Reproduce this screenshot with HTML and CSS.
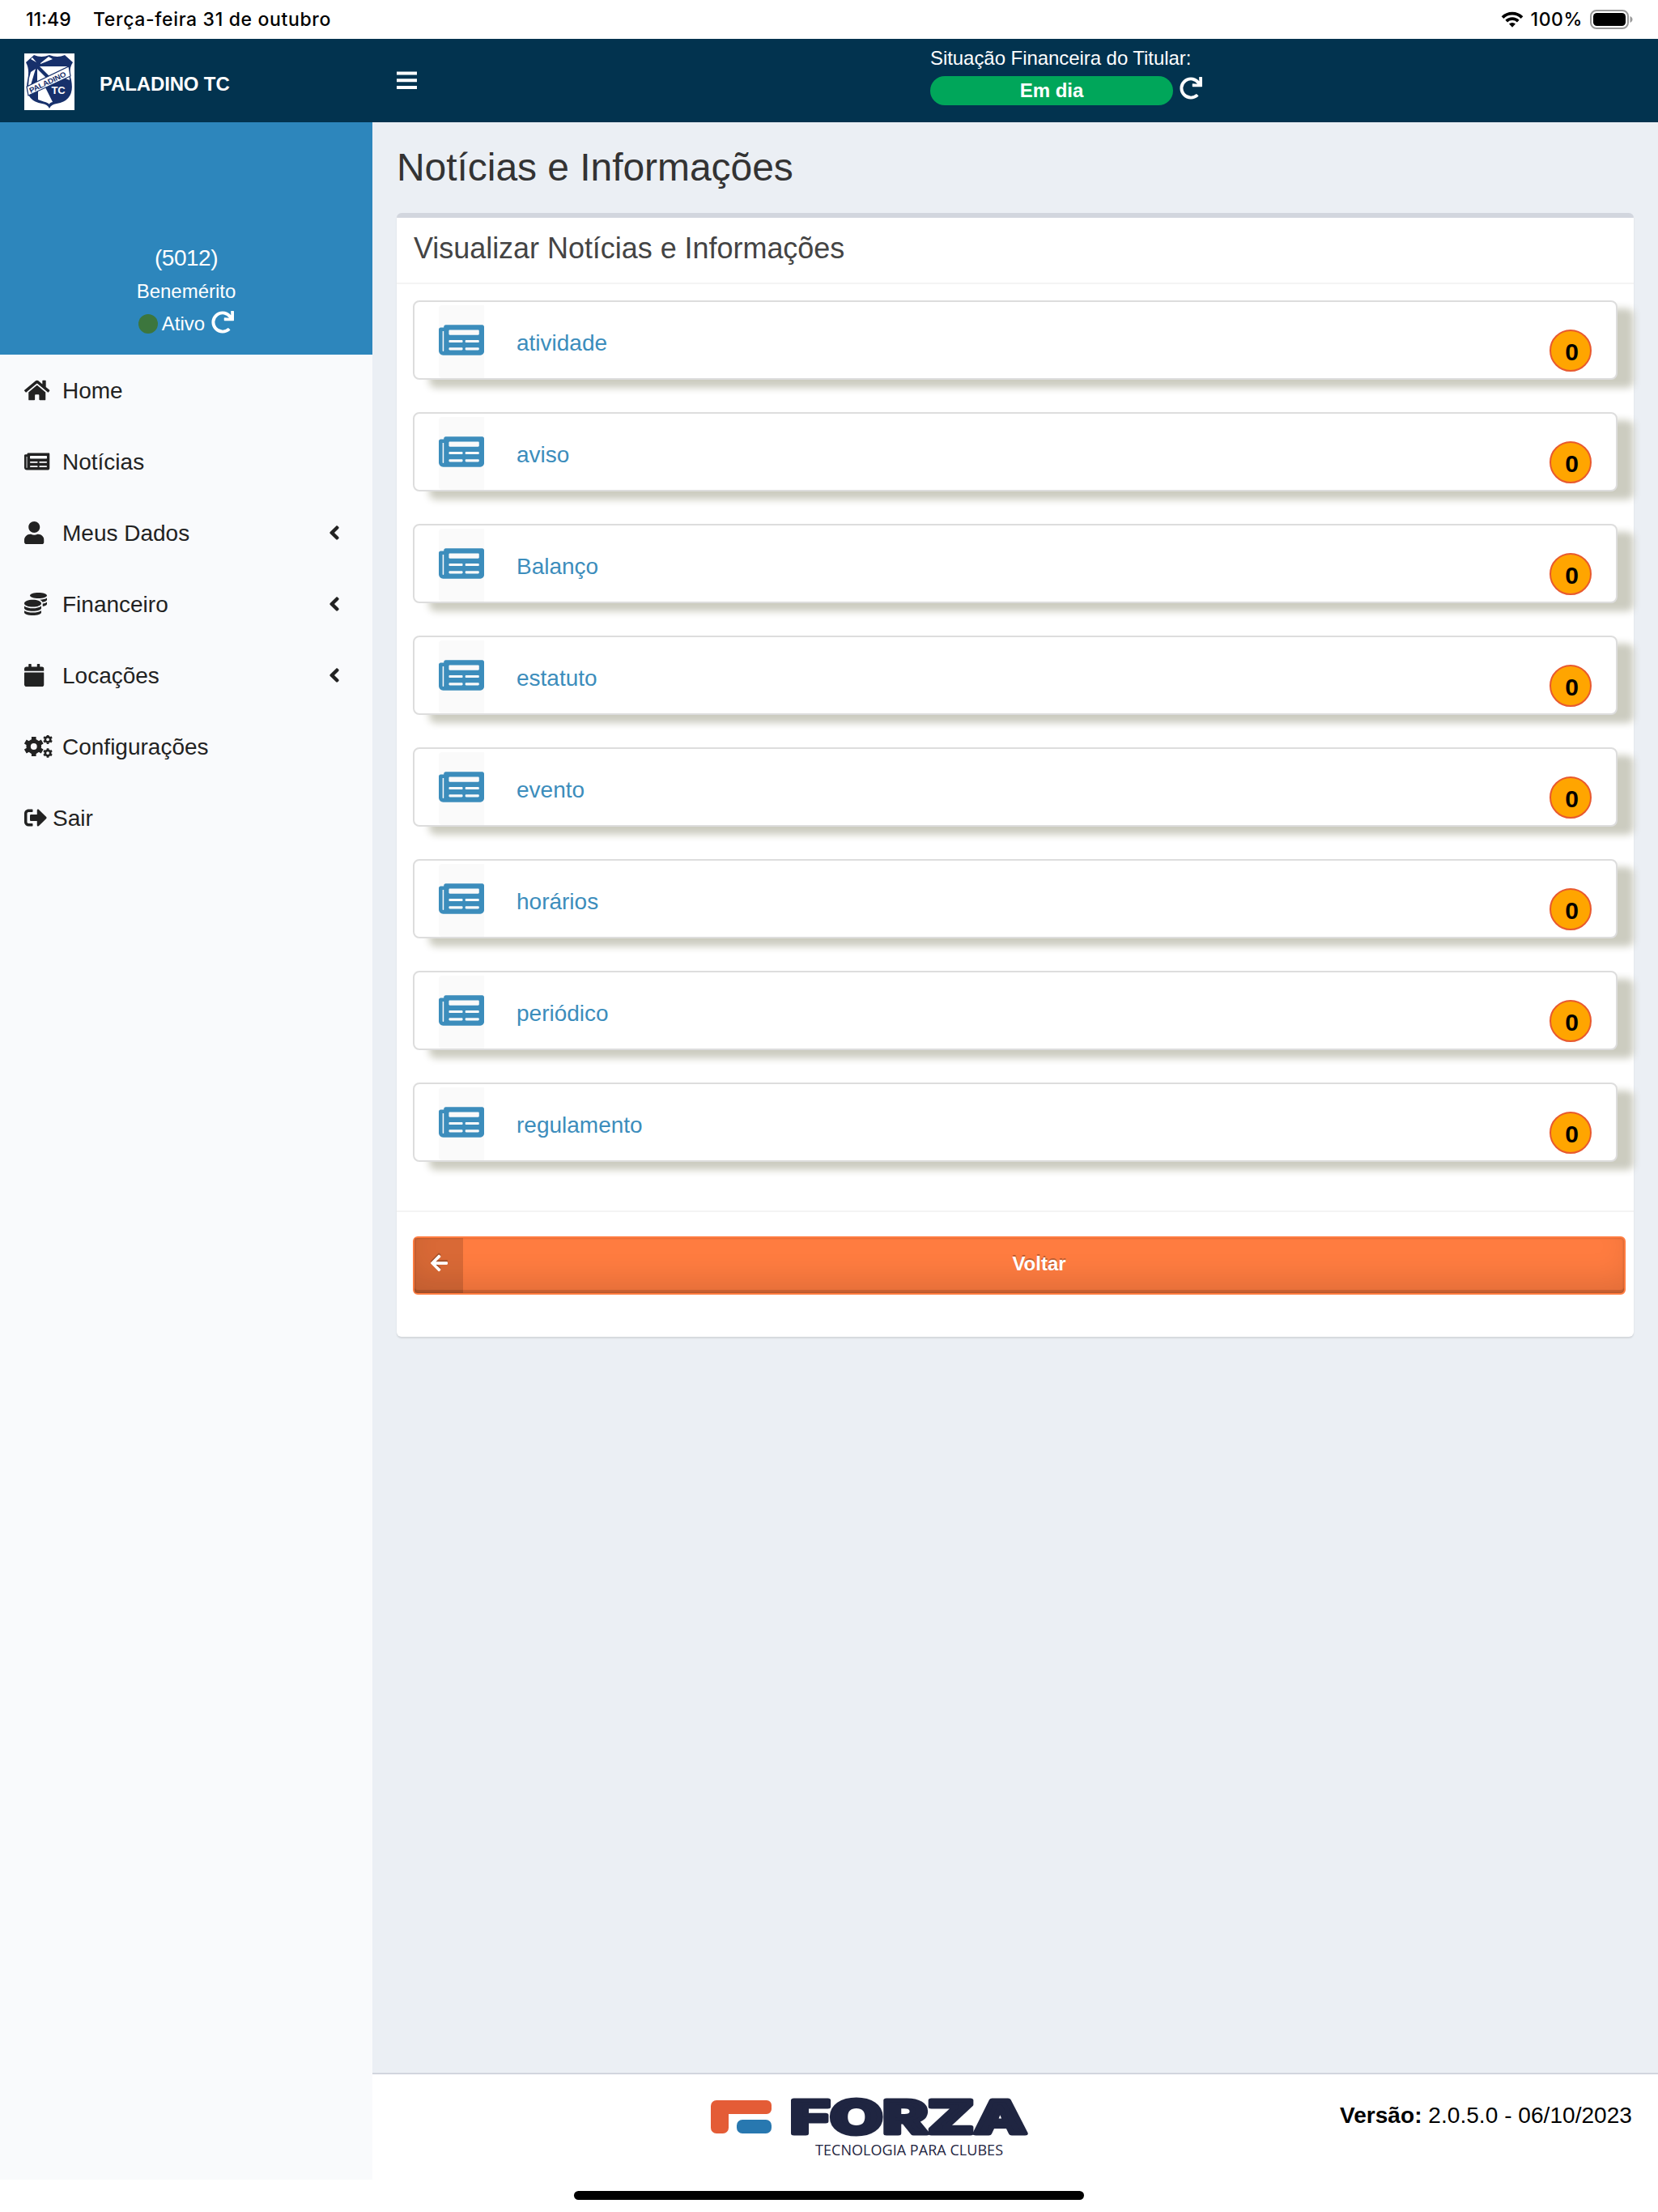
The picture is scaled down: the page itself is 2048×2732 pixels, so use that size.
FILE: index.html
```
<!DOCTYPE html>
<html lang="pt-BR">
<head>
    <meta charset="UTF-8">
    <meta name="viewport" content="width=device-width, initial-scale=1.0">
    <title>Paladino TC - Notícias e Informações</title>
    <link rel="stylesheet" href="styles.css">
</head>
<body>
    <!-- ícones -->
    <svg class="sprite" width="0" height="0">
        <symbol id="news" viewBox="0 0 576 512"><path d="M552 64H88c-13.255 0-24 10.745-24 24v8H24c-13.255 0-24 10.745-24 24v272c0 30.928 25.072 56 56 56h472c26.51 0 48-21.49 48-48V88c0-13.255-10.745-24-24-24zM56 400a8 8 0 0 1-8-8V144h16v248a8 8 0 0 1-8 8zm236-16H140c-6.627 0-12-5.373-12-12v-8c0-6.627 5.373-12 12-12h152c6.627 0 12 5.373 12 12v8c0 6.627-5.373 12-12 12zm208 0H348c-6.627 0-12-5.373-12-12v-8c0-6.627 5.373-12 12-12h152c6.627 0 12 5.373 12 12v8c0 6.627-5.373 12-12 12zm-208-96H140c-6.627 0-12-5.373-12-12v-8c0-6.627 5.373-12 12-12h152c6.627 0 12 5.373 12 12v8c0 6.627-5.373 12-12 12zm208 0H348c-6.627 0-12-5.373-12-12v-8c0-6.627 5.373-12 12-12h152c6.627 0 12 5.373 12 12v8c0 6.627-5.373 12-12 12zm0-96H140c-6.627 0-12-5.373-12-12v-40c0-6.627 5.373-12 12-12h360c6.627 0 12 5.373 12 12v40c0 6.627-5.373 12-12 12z"/></symbol>
        <symbol id="home" viewBox="0 0 576 512"><path d="M280.37 148.26L96 300.11V464a16 16 0 0 0 16 16l112.06-.29a16 16 0 0 0 15.92-16V368a16 16 0 0 1 16-16h64a16 16 0 0 1 16 16v95.64a16 16 0 0 0 16 16.05L464 480a16 16 0 0 0 16-16V300L295.67 148.26a12.19 12.19 0 0 0-15.3 0zM571.6 251.47L488 182.56V44.05a12 12 0 0 0-12-12h-56a12 12 0 0 0-12 12v72.61L318.47 43a48 48 0 0 0-61 0L4.34 251.47a12 12 0 0 0-1.6 16.9l25.5 31A12 12 0 0 0 45.15 301l235.22-193.74a12.19 12.19 0 0 1 15.3 0L530.9 301a12 12 0 0 0 16.9-1.6l25.5-31a12 12 0 0 0-1.7-16.93z"/></symbol>
        <symbol id="user" viewBox="0 0 448 512"><path d="M224 256c70.7 0 128-57.3 128-128S294.7 0 224 0 96 57.3 96 128s57.3 128 128 128zm89.6 32h-16.7c-22.2 10.2-46.9 16-72.9 16s-50.6-5.8-72.9-16h-16.7C60.2 288 0 348.2 0 422.4V464c0 26.5 21.5 48 48 48h352c26.5 0 48-21.5 48-48v-41.6c0-74.2-60.2-134.4-134.4-134.4z"/></symbol>
        <symbol id="coins" viewBox="0 0 512 512"><path d="M0 405.3V448c0 35.3 86 64 192 64s192-28.7 192-64v-42.7C342.7 434.4 267.2 448 192 448S41.3 434.4 0 405.3zM320 128c106 0 192-28.7 192-64S426 0 320 0 128 28.7 128 64s86 64 192 64zM0 300.4V352c0 35.3 86 64 192 64s192-28.7 192-64v-51.6c-41.3 34-116.9 51.6-192 51.6S41.3 334.4 0 300.4zm416 11c57.3-11.1 96-31.7 96-55.4v-42.7c-23.2 16.4-57.3 27.6-96 34.5v63.6zM192 160C86 160 0 195.8 0 240s86 80 192 80 192-35.8 192-80-86-80-192-80zm219.3 56.3c60-10.8 100.7-32 100.7-56.3v-42.7c-35.5 25.1-96.5 38.6-160.7 41.8 29.5 14.3 51.2 33.5 60 57.2z"/></symbol>
        <symbol id="calendar" viewBox="0 0 448 512"><path d="M12 192h424c6.6 0 12 5.4 12 12v260c0 26.500-21.500 48-48 48H48c-26.500 0-48-21.500-48-48V204c0-6.600 5.400-12 12-12zm436-44v-36c0-26.500-21.500-48-48-48h-48V12c0-6.600-5.400-12-12-12h-40c-6.600 0-12 5.400-12 12v52H160V12c0-6.600-5.400-12-12-12h-40c-6.600 0-12 5.400-12 12v52H48C21.500 64 0 85.500 0 112v36c0 6.600 5.400 12 12 12h424c6.600 0 12-5.400 12-12z"/></symbol>
        <symbol id="cog" viewBox="-110 -110 220 220">
            <circle r="54" fill="none" stroke="currentColor" stroke-width="44"/>
            <path d="M0-66V-98M0 66V98M57-33L85-49M57 33L85 49M-57-33L-85-49M-57 33L-85 49" fill="none" stroke="currentColor" stroke-width="46"/>
        </symbol>
        <symbol id="cogs" viewBox="0 0 640 512">
            <use href="#cog" x="-32" y="9" width="494" height="494"/>
            <use href="#cog" x="412" y="-22" width="238" height="238"/>
            <use href="#cog" x="412" y="284" width="238" height="238"/>
        </symbol>
        <symbol id="signout" viewBox="0 0 512 512"><path d="M497 273L329 441c-15 15-41 4.500-41-17v-96H152c-13.300 0-24-10.700-24-24v-96c0-13.300 10.700-24 24-24h136V88c0-21.400 25.900-32 41-17l168 168c9.300 9.400 9.300 24.600 0 34zM192 436v-40c0-6.600-5.400-12-12-12H96c-17.700 0-32-14.300-32-32V160c0-17.700 14.300-32 32-32h84c6.600 0 12-5.400 12-12V76c0-6.600-5.400-12-12-12H96c-53 0-96 43-96 96v192c0 53 43 96 96 96h84c6.600 0 12-5.400 12-12z"/></symbol>
        <symbol id="redo" viewBox="0 0 512 512"><path d="M500.33 0h-47.41a12 12 0 0 0-12 12.57l4 82.76A247.42 247.42 0 0 0 256 8C119.34 8 7.9 119.53 8 256.19 8.1 393.07 119.1 504 256 504a247.1 247.1 0 0 0 166.18-63.91 12 12 0 0 0 .48-17.43l-34-34a12 12 0 0 0-16.38-.55A176 176 0 1 1 402.1 157.8l-101.53-4.87a12 12 0 0 0-12.57 12v47.41a12 12 0 0 0 12 12h200.33a12 12 0 0 0 12-12V12a12 12 0 0 0-12-12z"/></symbol>
        <symbol id="angle" viewBox="0 0 256 512"><path d="M31.700 239l136-136c9.400-9.400 24.600-9.400 33.900 0l22.600 22.600c9.400 9.400 9.400 24.600 0 33.900L127.900 256l96.400 96.400c9.400 9.400 9.400 24.600 0 33.900L201.700 409c-9.400 9.400-24.600 9.400-33.900 0l-136-136c-9.500-9.400-9.500-24.600-.1-34z"/></symbol>
    </svg>

    <!-- barra de status -->
    <div class="status-bar">
        <span class="status-time">11:49</span>
        <span class="status-date">Terça-feira 31 de outubro</span>
        <svg class="wifi" viewBox="0 0 28 20" width="28" height="20">
            <path d="M2 7.600a17 17 0 0 1 24 0M6.700 12.200a10.400 10.400 0 0 1 14.600 0" fill="none" stroke="#000" stroke-width="3.800"/>
            <path d="M14 19.800l-4-4.200a5.700 5.700 0 0 1 8 0z"/>
        </svg>
        <span class="status-pct">100%</span>
        <svg class="battery" viewBox="0 0 54 24" width="54" height="24">
            <rect x="1" y="1" width="46" height="22" rx="7" fill="none" stroke="#999" stroke-width="2"/>
            <rect x="4" y="4" width="40" height="16" rx="4.500"/>
            <path d="M49.500 8c4 1.500 4 6.500 0 8z" fill="#999"/>
        </svg>
    </div>

    <header class="main-header">
        <div class="logo">
            <svg class="crest" viewBox="0 0 62 70" width="62" height="70">
                <rect width="62" height="70" fill="#fff"/>
                <path d="M2 11L12 2q9 4 19 0q10 4 19 0L60 11Q54 20 58 33Q63 58 40 62Q33 63 31 68Q29 63 22 62Q-1 58 4 33Q7 20 2 11z" fill="#17306b"/>
                <path d="M20 12L30 4l5 3L20 13zM19 16H55L54 21 33 30zM14 19L8 23Q5 31 5 40l3-1zM16 19v20l14-6zM8 7l2-2 5 6zM17 46l9-4 9 18q-4 1-4 3-1-2-7-3.500L17 57zM46 29l9-5 1 9z" fill="#fff"/>
                <path d="M3 41L55 16l2 12L5 52z" fill="#fff" stroke="#17306b" stroke-width="1.200"/>
                <text class="crest-name" transform="translate(8 49) rotate(-25.500)" textLength="49" lengthAdjust="spacingAndGlyphs">PALADINO</text>
                <text class="crest-tc" x="33.500" y="50">TC</text>
            </svg>
            <span>PALADINO TC</span>
        </div>
        <div class="navbar">
            <svg class="bars" viewBox="0 0 25 22" width="25" height="22"><path d="M0 .5h25v4H0zM0 9.300h25v4H0zM0 18h25v4H0z"/></svg>
            <div class="finance">
                <div class="finance-title">Situação Financeira do Titular:</div>
                <div class="finance-row">
                    <span class="label-ok">Em dia</span>
                    <svg width="28" height="28"><use href="#redo"/></svg>
                </div>
            </div>
        </div>
    </header>

    <div class="wrapper">
        <aside class="sidebar">
            <div class="user-panel">
                <div class="user-code">(5012)</div>
                <div class="user-type">Benemérito</div>
                <div class="user-status">
                    <span class="dot"></span>Ativo
                    <svg width="28" height="28"><use href="#redo"/></svg>
                </div>
            </div>
            <nav class="menu">
                <a><svg width="31.500" height="28"><use href="#home"/></svg><span>Home</span></a>
                <a><svg width="31.500" height="28"><use href="#news"/></svg><span>Notícias</span></a>
                <a><svg width="24.500" height="28"><use href="#user"/></svg><span>Meus Dados</span><svg width="14" height="28"><use href="#angle"/></svg></a>
                <a><svg width="28" height="28"><use href="#coins"/></svg><span>Financeiro</span><svg width="14" height="28"><use href="#angle"/></svg></a>
                <a><svg width="24.500" height="28"><use href="#calendar"/></svg><span>Locações</span><svg width="14" height="28"><use href="#angle"/></svg></a>
                <a><svg width="35" height="28"><use href="#cogs"/></svg><span>Configurações</span></a>
                <a class="exit"><svg width="28" height="28"><use href="#signout"/></svg><span>Sair</span></a>
            </nav>
        </aside>

        <div class="main">
            <section class="content">
                <h1>Notícias e Informações</h1>
                <div class="box">
                    <div class="box-header"><h3>Visualizar Notícias e Informações</h3></div>
                    <div class="box-body">
                        <a class="item"><span class="item-icon"><svg width="56" height="50"><use href="#news"/></svg></span><span class="item-name">atividade</span><span class="badge">0</span></a>
                        <a class="item"><span class="item-icon"><svg width="56" height="50"><use href="#news"/></svg></span><span class="item-name">aviso</span><span class="badge">0</span></a>
                        <a class="item"><span class="item-icon"><svg width="56" height="50"><use href="#news"/></svg></span><span class="item-name">Balanço</span><span class="badge">0</span></a>
                        <a class="item"><span class="item-icon"><svg width="56" height="50"><use href="#news"/></svg></span><span class="item-name">estatuto</span><span class="badge">0</span></a>
                        <a class="item"><span class="item-icon"><svg width="56" height="50"><use href="#news"/></svg></span><span class="item-name">evento</span><span class="badge">0</span></a>
                        <a class="item"><span class="item-icon"><svg width="56" height="50"><use href="#news"/></svg></span><span class="item-name">horários</span><span class="badge">0</span></a>
                        <a class="item"><span class="item-icon"><svg width="56" height="50"><use href="#news"/></svg></span><span class="item-name">periódico</span><span class="badge">0</span></a>
                        <a class="item"><span class="item-icon"><svg width="56" height="50"><use href="#news"/></svg></span><span class="item-name">regulamento</span><span class="badge">0</span></a>
                    </div>
                    <div class="box-footer">
                        <button class="btn-back">
                            <span class="btn-icon"><svg viewBox="0 0 448 512" width="21" height="24"><path d="M257.500 445.100l-22.200 22.200c-9.400 9.400-24.600 9.400-33.900 0L7 273c-9.400-9.400-9.400-24.600 0-33.900L201.400 44.700c9.400-9.400 24.600-9.400 33.900 0l22.200 22.200c9.500 9.500 9.300 25-.4 34.300L136.600 216H424c13.300 0 24 10.700 24 24v32c0 13.300-10.700 24-24 24H136.600l120.500 114.800c9.800 9.300 10 24.800.4 34.300z"/></svg></span>
                            <span class="btn-text">Voltar</span>
                        </button>
                    </div>
                </div>
            </section>
            <footer class="main-footer">
                <svg class="forza" viewBox="0 -20 392 100" width="392" height="100">
                    <path d="M7 2H69a6 6 0 0 1 6 6v5a6 6 0 0 1-6 6H22V36a7 7 0 0 1-7 7H7a7 7 0 0 1-7-7V9a7 7 0 0 1 7-7z" fill="#e45c36"/>
                    <rect x="32" y="26" width="43" height="17" rx="7" fill="#2878b0"/>
                    <text class="forza-name" x="98" y="42.500" textLength="292" lengthAdjust="spacingAndGlyphs">FORZA</text>
                    <text class="forza-sub" x="129" y="69.500" textLength="232">TECNOLOGIA PARA CLUBES</text>
                </svg>
                <div class="version"><b>Versão:</b> 2.0.5.0 - 06/10/2023</div>
            </footer>
        </div>
    </div>
    <div class="home-indicator"></div>
</body>
</html>
```
FILE: styles.css
```
* {
    box-sizing: border-box;
}
body {
    margin: 0;
    height: 2732px;
    position: relative;
    overflow: hidden;
    background: #fff;
    font-family: "Liberation Sans", Arial, sans-serif;
    font-size: 28px;
    color: #222;
}
svg {
    fill: currentColor;
    flex-shrink: 0;
}
.sprite {
    position: absolute;
}

/* barra de status */
.status-bar {
    height: 48px;
    display: flex;
    align-items: center;
    padding: 0 30px 0 32px;
    font-family: Inter, sans-serif;
    font-size: 23px;
    font-weight: 500;
    color: #000;
}
.status-time {
    width: 83px;
}
.status-date {
    letter-spacing: 0.65px;
}
.wifi {
    margin-left: auto;
}
.status-pct {
    margin: 0 9px 0 9px;
    letter-spacing: 0.6px;
}

/* cabeçalho */
.main-header {
    height: 103px;
    display: flex;
    background: #02334f;
    color: #fff;
}
.logo {
    width: 460px;
    display: flex;
    align-items: center;
    padding-left: 30px;
    gap: 31px;
    font-size: 24px;
    font-weight: bold;
    letter-spacing: -0.15px;
}
.logo span {
    padding-top: 8px;
}
.crest {
    margin-top: 2px;
}
.crest-name {
    font-size: 9px;
    font-weight: bold;
    fill: #17306b;
}
.crest-tc {
    font-size: 13px;
    font-weight: bold;
    fill: #fff;
}
.navbar {
    flex: 1;
    display: flex;
    padding-left: 30px;
}
.bars {
    margin-top: 40px;
}
.finance {
    margin: 10px 0 0 634px;
    font-size: 24px;
}
.finance-title {
    line-height: 28px;
    letter-spacing: -0.06px;
}
.finance-row {
    display: flex;
    gap: 8px;
    margin-top: 8px;
}
.finance-row svg {
    margin-top: 1px;
}
.label-ok {
    width: 300px;
    height: 36px;
    line-height: 35px;
    border-radius: 18px;
    background: #00a65a;
    text-align: center;
    font-weight: bold;
}

/* menu lateral */
.wrapper {
    display: flex;
    height: 2581px;
}
.sidebar {
    width: 460px;
    height: 2541px;
    background: #f9fafc;
}
.user-panel {
    height: 287px;
    padding-top: 148px;
    background: #2d86bc;
    color: #fff;
    text-align: center;
    font-size: 24px;
}
.user-code {
    font-size: 28px;
    line-height: 40px;
    letter-spacing: -0.5px;
}
.user-type {
    padding-top: 1px;
    line-height: 40px;
}
.user-status {
    display: flex;
    justify-content: center;
    align-items: center;
    line-height: 40px;
}
.dot {
    width: 24px;
    height: 24px;
    margin: -1px 5px 0 0;
    border-radius: 50%;
    background: #3c763d;
}
.user-status svg {
    margin: -4px 0 0 8px;
}
.menu a {
    display: grid;
    grid-template-columns: 47px 1fr 14px;
    align-items: center;
    height: 88px;
    padding: 0 40px 0 30px;
}
.menu a.exit {
    grid-template-columns: 35px 1fr;
}
.menu span {
    padding-top: 2px;
}

/* conteúdo */
.main {
    flex: 1;
    display: flex;
    flex-direction: column;
}
.content {
    height: 2409px;
    padding: 29px 30px 0;
    background: #ebeff4;
}
h1 {
    margin: 0 0 29px;
    font-size: 48px;
    line-height: 54px;
    font-weight: normal;
    letter-spacing: -0.05px;
    color: #333;
}
.box {
    height: 1388px;
    background: #fff;
    border-top: 6px solid #d2d6de;
    border-radius: 6px;
    box-shadow: 0 2px 2px rgba(0,0,0,0.1);
}
.box-header {
    height: 82px;
    padding: 18px 20px 0 21px;
    border-bottom: 2px solid #f4f4f4;
}
h3 {
    margin: 0;
    font-size: 36px;
    line-height: 40px;
    font-weight: normal;
    letter-spacing: -0.04px;
    color: #444;
}
.box-body {
    height: 1144px;
    padding: 20px 20px 0;
}
.item {
    display: flex;
    height: 98px;
    margin-bottom: 40px;
    padding: 4px 30px 0;
    background: #fff;
    border: 2px solid #ddd;
    border-radius: 8px;
    box-shadow: 20px 10px 10px #ccccc0;
    color: #3c8dbc;
}
.item-icon {
    width: 56px;
    height: 90px;
    padding-top: 18px;
    background: #fafafa;
    border-radius: 4px 0 0 4px;
}
.item-name {
    flex: 1;
    padding-left: 40px;
    line-height: 94px;
}
.badge {
    width: 52px;
    height: 52px;
    margin-top: 30px;
    padding-left: 3px;
    line-height: 51px;
    background: #ffa500;
    border: 2px solid #e8592f;
    border-radius: 50%;
    color: #000;
    text-align: center;
    font-size: 30px;
    font-weight: bold;
}
.box-footer {
    padding: 30px 10px 0 20px;
    border-top: 2px solid #f4f4f4;
}
.btn-back {
    display: flex;
    width: 100%;
    height: 72px;
    padding: 0;
    border: 2px solid #ff7c40;
    border-radius: 6px;
    background: #ff7c40;
    box-shadow: inset 0 -4px 0 rgba(0,0,0,0.12), inset 0 0 2px 1px rgba(0,0,0,0.12), inset 0 -24px 36px -8px rgba(0,0,0,0.12);
    color: #fff;
    font-family: inherit;
    font-size: 24px;
    font-weight: bold;
    text-shadow: 0 -2px 0 rgba(0,0,0,0.25);
}
.btn-icon {
    width: 60px;
    height: 68px;
    padding: 19px 0 0 20px;
    background: rgba(0,0,0,0.15);
    text-align: left;
}
.btn-icon svg {
    display: block;
    filter: drop-shadow(0 -2px 0 rgba(0,0,0,0.25));
}
.btn-text {
    flex: 1;
    padding-right: 11px;
    line-height: 64px;
}

/* rodapé */
.main-footer {
    display: flex;
    justify-content: space-between;
    height: 172px;
    padding: 10px 32px 0 418px;
    background: #fff;
    border-top: 2px solid #d2d6de;
    color: #000;
}
.forza-name {
    font-family: Inter, sans-serif;
    font-size: 56px;
    font-weight: 800;
    fill: #1f2541;
    stroke: #1f2541;
    stroke-width: 5;
    stroke-linejoin: round;
}
.forza-sub {
    font-family: "Open Sans", "Noto Sans", sans-serif;
    font-size: 18px;
    fill: #1f2541;
}
.version {
    padding-top: 25px;
    letter-spacing: 0.05px;
}
.home-indicator {
    position: absolute;
    left: 709px;
    top: 2706px;
    width: 630px;
    height: 11px;
    border-radius: 6px;
    background: #000;
}
```
